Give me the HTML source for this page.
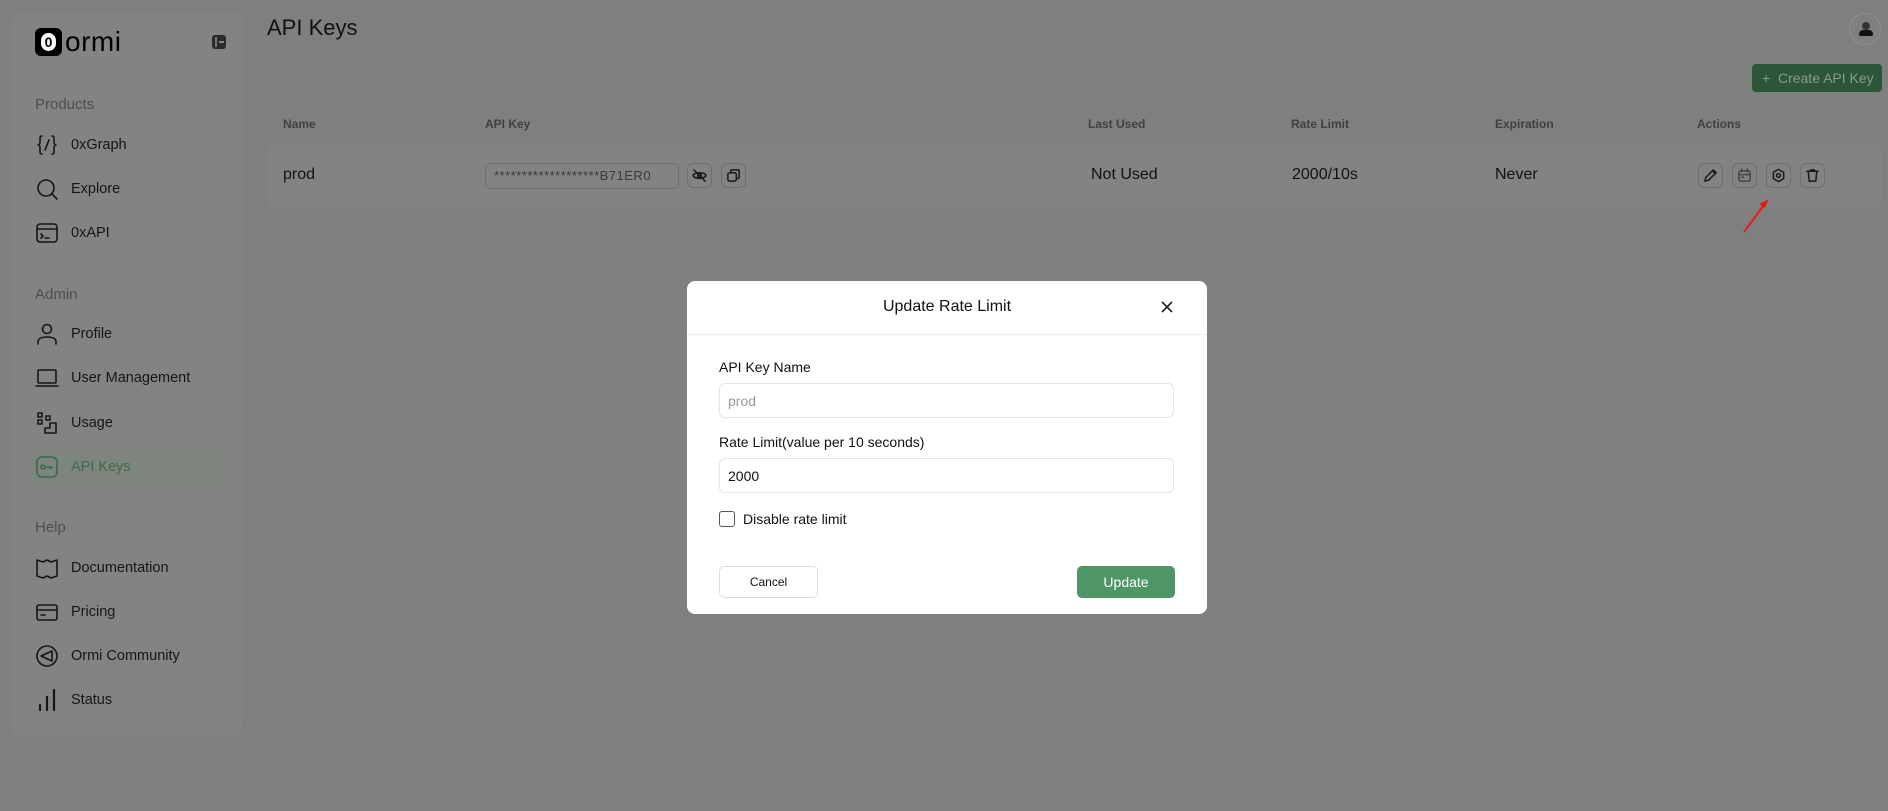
<!DOCTYPE html>
<html><head><meta charset="utf-8"><style>
*{box-sizing:border-box;margin:0;padding:0}
body{width:1888px;height:811px;background:#7f7f7f;font-family:"Liberation Sans",sans-serif;position:relative;overflow:hidden;color:#111}
.abs{position:absolute}
.side{left:11px;top:12px;width:232px;height:725px;background:#838383;border-radius:14px}
.sec{position:absolute;left:35px;font-size:15px;color:#4e4e4e}
.item{position:absolute;left:71px;font-size:14.5px;color:#161616;transform:translateY(-50%)}
.ic{position:absolute;left:35px;width:24px;height:24px;transform:translateY(-50%)}
.ic svg{width:24px;height:24px;fill:none;stroke:#161616;stroke-width:1.6;stroke-linecap:round;stroke-linejoin:round}
.th{position:absolute;top:117px;font-size:12px;font-weight:bold;color:#404040}
.td{position:absolute;top:166px;font-size:16px;color:#111}
.btn{position:absolute;width:25px;height:25px;border:1px solid #6f6f6f;border-radius:6px}
.btn svg{position:absolute;left:4px;top:4px;width:15px;height:15px;fill:none;stroke:#1a1a1a;stroke-width:1.6;stroke-linecap:round;stroke-linejoin:round}
.modal{left:687px;top:281px;width:520px;height:333px;background:#fff;border-radius:8px}
.lbl{position:absolute;left:32px;font-size:14px;color:#111}
.inp{position:absolute;left:32px;width:455px;height:35px;border:1px solid #e3e3e3;border-radius:6px;font-size:14px;padding:9px 8px}
</style></head><body>
<div class="abs side"></div>
<div class="abs" style="left:35px;top:28px;width:27px;height:28px;background:#000;border-radius:6px"><div style="position:absolute;left:6px;top:5px;width:15px;height:18px;border-radius:8px;background:#fff"></div><div style="position:absolute;left:6px;top:5px;width:15px;height:18px;text-align:center;font-size:14px;font-weight:bold;line-height:18px;color:#000">0</div></div>
<div class="abs" style="left:65px;top:26px;font-size:28px;color:#000;letter-spacing:0.5px">ormi</div>
<div class="abs" style="left:212px;top:35px;width:14px;height:14px;background:#2a2a2a;border-radius:3px"><div style="position:absolute;left:3px;top:2px;width:2px;height:10px;background:#777"></div><div style="position:absolute;left:7px;top:6px;width:5px;height:2px;background:#888"></div></div>

<div class="sec" style="top:96px">Products</div>
<div class="ic" style="top:145px"><svg viewBox="0 0 24 24"><path d="M7 3c-2 0-2 1-2 3v3c0 2-1 3-2 3 1 0 2 1 2 3v3c0 2 0 3 2 3M17 3c2 0 2 1 2 3v3c0 2 1 3 2 3-1 0-2 1-2 3v3c0 2 0 3-2 3M14 7l-4 10"/></svg></div><div class="item" style="top:145px">0xGraph</div>
<div class="ic" style="top:189px"><svg viewBox="0 0 24 24"><circle cx="11" cy="11" r="8"/><path d="M17 17l5 5"/></svg></div><div class="item" style="top:189px">Explore</div>
<div class="ic" style="top:233px"><svg viewBox="0 0 24 24"><rect x="2" y="3" width="20" height="18" rx="3"/><path d="M2 8h20M6 13l2 2-2 2M10 17h4"/></svg></div><div class="item" style="top:233px">0xAPI</div>
<div class="sec" style="top:286px">Admin</div>
<div class="ic" style="top:334px"><svg viewBox="0 0 24 24"><circle cx="12" cy="7" r="4.5"/><path d="M3 22v-2c0-3 3-5 9-5s9 2 9 5v2"/></svg></div><div class="item" style="top:334px">Profile</div>
<div class="ic" style="top:378px"><svg viewBox="0 0 24 24"><rect x="3" y="4" width="18" height="13" rx="1"/><path d="M1 20h22"/></svg></div><div class="item" style="top:378px">User Management</div>
<div class="ic" style="top:423px"><svg viewBox="0 0 24 24"><rect x="3" y="2" width="4" height="4"/><rect x="3" y="9" width="4" height="4"/><rect x="11" y="5" width="4" height="4"/><path d="M10 22v-5h5v-5h6v10z"/></svg></div><div class="item" style="top:423px">Usage</div>
<div class="abs" style="left:27px;top:447px;width:200px;height:40px;background:#7e857f;border-radius:8px"></div>
<div class="ic" style="top:467px"><svg viewBox="0 0 24 24" style="stroke:#3d6b4a"><rect x="2" y="2" width="20" height="20" rx="5"/><circle cx="8" cy="12" r="2"/><path d="M10 12h7M15 12v2M17 12v1"/></svg></div><div class="item" style="top:467px;color:#3d6b4a">API Keys</div>
<div class="sec" style="top:519px">Help</div>
<div class="ic" style="top:568px"><svg viewBox="0 0 24 24"><path d="M2 4l6 2 4-2 4 2 6-2v16l-6 2-4-2-4 2-6-2z"/></svg></div><div class="item" style="top:568px">Documentation</div>
<div class="ic" style="top:612px"><svg viewBox="0 0 24 24"><rect x="2" y="5" width="20" height="15" rx="2"/><path d="M2 10h20M6 15h4"/></svg></div><div class="item" style="top:612px">Pricing</div>
<div class="ic" style="top:656px"><svg viewBox="0 0 24 24"><circle cx="12" cy="12" r="10"/><path d="M17 7L6 12l11 5z"/></svg></div><div class="item" style="top:656px">Ormi Community</div>
<div class="ic" style="top:700px"><svg viewBox="0 0 24 24" style="stroke-width:2.2"><path d="M5 22v-5M12 22V9M19 22V2"/></svg></div><div class="item" style="top:700px">Status</div>

<div class="abs" style="left:267px;top:15px;font-size:22px;color:#111">API Keys</div>
<div class="abs" style="left:1849px;top:13px;width:32px;height:32px;border-radius:50%;border:1px solid #8e8e8e;background:#808080"><div style="position:absolute;left:12px;top:8px;width:8px;height:8px;border-radius:50%;background:#333"></div><div style="position:absolute;left:9px;top:16px;width:14px;height:6px;border-radius:4px 4px 2px 2px;background:#111"></div></div>
<div class="abs" style="left:1752px;top:64px;width:130px;height:28px;background:#2d5537;border-radius:4px;color:#8b9c8f;font-size:14px;line-height:28px;padding-left:10px">+ &nbsp;Create API Key</div>

<div class="th" style="left:283px">Name</div>
<div class="th" style="left:485px">API Key</div>
<div class="th" style="left:1088px">Last Used</div>
<div class="th" style="left:1291px">Rate Limit</div>
<div class="th" style="left:1495px">Expiration</div>
<div class="th" style="left:1697px">Actions</div>
<div class="abs" style="left:267px;top:144px;width:1615px;height:64px;background:#838383;border-radius:8px"></div>
<div class="td" style="left:283px">prod</div>
<div class="abs" style="left:485px;top:163px;width:194px;height:26px;border:1px solid #6f6f6f;border-radius:5px;font-size:13px;color:#3a3a3a;line-height:24px;padding-left:8px;letter-spacing:0.5px">*******************B71ER0</div>
<div class="btn" style="left:687px;top:163px"><svg viewBox="0 0 16 16"><path d="M1 8c2-4 12-4 14 0-2 4-12 4-14 0zM2 2l12 12"/><circle cx="8" cy="8" r="2"/></svg></div>
<div class="btn" style="left:721px;top:163px"><svg viewBox="0 0 16 16"><rect x="2" y="5" width="9" height="9" rx="2"/><path d="M5 5V3a1 1 0 011-1h7a1 1 0 011 1v7a1 1 0 01-1 1h-2"/></svg></div>
<div class="td" style="left:1091px">Not Used</div>
<div class="td" style="left:1292px">2000/10s</div>
<div class="td" style="left:1495px">Never</div>
<div class="btn" style="left:1698px;top:163px"><svg viewBox="0 0 16 16"><path d="M2 14l1-4 8-8 3 3-8 8zM10 3l3 3"/></svg></div>
<div class="btn" style="left:1732px;top:163px"><svg viewBox="0 0 16 16" style="stroke:#444"><rect x="2" y="3" width="12" height="11" rx="2"/><path d="M2 7h12M5 1v3M11 1v3M5 10h2"/></svg></div>
<div class="btn" style="left:1766px;top:163px"><svg viewBox="0 0 16 16"><path d="M8 1.5l5.5 3.2v6.6L8 14.5l-5.5-3.2V4.7z"/><circle cx="8" cy="8" r="2"/></svg></div>
<div class="btn" style="left:1800px;top:163px"><svg viewBox="0 0 16 16"><path d="M2 3.5h12M6 3.5V2h4v1.5M3.5 4l1 10h7l1-10"/></svg></div>
<svg class="abs" style="left:1740px;top:195px" width="40" height="40" viewBox="0 0 40 40"><path d="M4 37L24 10" stroke="#e0201a" stroke-width="2.2"/><path d="M29 4l-10 5 6 4z" fill="#e0201a"/></svg>

<div class="abs modal">
<div style="position:absolute;left:0;right:0;top:17px;text-align:center;font-size:16px;color:#111">Update Rate Limit</div>
<svg style="position:absolute;left:474px;top:20px" width="12" height="12" viewBox="0 0 12 12"><path d="M1 1l10 10M11 1L1 11" stroke="#222" stroke-width="1.6"/></svg>
<div style="position:absolute;left:0;right:0;top:53px;height:1px;background:#ececec"></div>
<div class="lbl" style="top:78px">API Key Name</div>
<div class="inp" style="top:102px;color:#999">prod</div>
<div class="lbl" style="top:153px">Rate Limit(value per 10 seconds)</div>
<div class="inp" style="top:177px;color:#111">2000</div>
<div style="position:absolute;left:32px;top:230px;width:16px;height:16px;border:1.5px solid #555;border-radius:3px"></div>
<div class="lbl" style="left:56px;top:230px">Disable rate limit</div>
<div style="position:absolute;left:32px;top:285px;width:99px;height:32px;border:1px solid #ddd;border-radius:5px;text-align:center;line-height:30px;font-size:12px;color:#111">Cancel</div>
<div style="position:absolute;left:390px;top:285px;width:98px;height:32px;background:#4f9566;border-radius:5px;text-align:center;line-height:32px;font-size:14px;color:#fff">Update</div>
</div>
</body></html>
